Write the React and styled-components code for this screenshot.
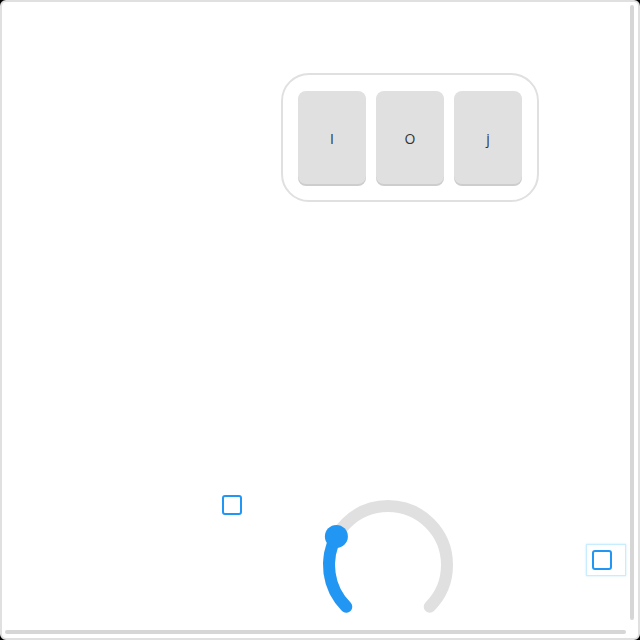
import React from "react";
import styled, { createGlobalStyle } from "styled-components";

const Global = createGlobalStyle`
  html, body { margin: 0; padding: 0; background: #000; }
  body { font-family: "Open Sans", "DejaVu Sans", sans-serif; }
  * { box-sizing: border-box; }
`;

const Frame = styled.div`
  position: relative;
  width: 640px;
  height: 640px;
  border: 2px solid #e0e0e0;
  border-radius: 6px;
  background: #fff;
  overflow: hidden;
  display: flex;
  flex-direction: column;
`;

const KeyGroup = styled.div`
  margin: 71px 0 0 279px;
  width: 258px;
  height: 129px;
  border: 2px solid #e0e0e0;
  border-radius: 28px;
  padding: 16px 15px 14px;
  display: flex;
  gap: 10px;
`;

const Key = styled.div`
  width: 68px;
  height: 93px;
  border-radius: 8px;
  background: #e0e0e0;
  box-shadow: 0 2px 0 #cdcdcd;
  display: flex;
  align-items: center;
  justify-content: center;
  font-size: 14px;
  color: #333;
  padding-top: 1px;
`;

const ControlRow = styled.div`
  margin-top: 293px;
  display: flex;
  align-items: flex-start;
`;

const Check = styled.div`
  width: 20px;
  height: 20px;
  border: 2px solid #2196f3;
  border-radius: 3px;
  background: #fff;
  margin-left: ${(p) => p.$ml || 0}px;
`;

const KnobSvg = styled.svg`
  display: block;
  margin-left: 76px;
  flex-shrink: 0;
`;

const FocusBox = styled.div`
  margin-left: 129px;
  margin-top: 50px;
  width: 38px;
  height: 30px;
  padding: 5px 0 0 5px;
  box-shadow: 0 0 0 1px #c8edff, 0 0 2px 1px rgba(3, 169, 244, 0.25);
`;

const ScrollV = styled.div`
  position: absolute;
  left: 628px;
  top: 3px;
  width: 4px;
  height: 615px;
  border-radius: 2px;
  background: #d6d6d6;
`;

const ScrollH = styled.div`
  position: absolute;
  left: 3px;
  top: 628px;
  width: 621px;
  height: 4px;
  border-radius: 2px;
  background: #d6d6d6;
`;

function Knob({ value }) {
  const cx = 70, cy = 70, r = 59;
  const start = 135;
  const end = start + 270 * value;
  const pt = (deg) => {
    const a = (deg * Math.PI) / 180;
    return [cx + r * Math.cos(a), cy + r * Math.sin(a)];
  };
  const [sx, sy] = pt(135);
  const [ex, ey] = pt(45);
  const [vx, vy] = pt(end);
  const large = 270 * value > 180 ? 1 : 0;
  return (
    <KnobSvg width="140" height="140" viewBox="0 0 140 140">
      <path
        d={`M ${sx} ${sy} A ${r} ${r} 0 1 1 ${ex} ${ey}`}
        fill="none"
        stroke="#e0e0e0"
        strokeWidth="12"
        strokeLinecap="round"
      />
      <path
        d={`M ${sx} ${sy} A ${r} ${r} 0 ${large} 1 ${vx} ${vy}`}
        fill="none"
        stroke="#2196f3"
        strokeWidth="12"
        strokeLinecap="round"
      />
      <circle cx={vx} cy={vy} r="11.5" fill="#2196f3" />
    </KnobSvg>
  );
}

export default function App() {
  return (
    <>
      <Global />
      <Frame>
        <KeyGroup>
          <Key>I</Key>
          <Key>O</Key>
          <Key>j</Key>
        </KeyGroup>
        <ControlRow>
          <Check $ml={220} />
          <Knob value={0.274} />
          <FocusBox>
            <Check />
          </FocusBox>
        </ControlRow>
        <ScrollV />
        <ScrollH />
      </Frame>
    </>
  );
}
